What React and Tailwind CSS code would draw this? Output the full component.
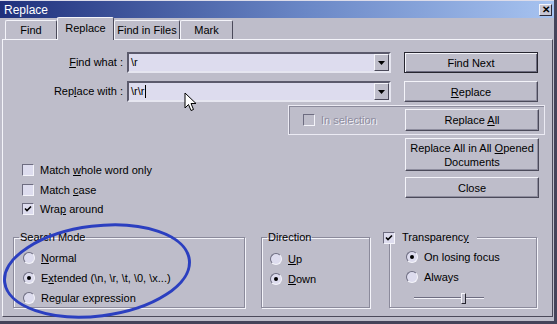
import React from "react";

const BG = "bg-[#bebdca]";

const Check = ({ checked, disabled }) => (
  <span
    className={`inline-flex h-[12px] w-[12px] shrink-0 items-center justify-center border border-t-[#6d6c80] border-l-[#6d6c80] border-b-[#f4f4fa] border-r-[#f4f4fa] ${
      disabled ? "bg-[#bebdca]" : "bg-[#dddcee]"
    }`}
  >
    {checked && (
      <svg width="8" height="8" viewBox="0 0 8 8">
        <path d="M1 3.5 L3 5.5 L7 1.5" stroke="#000" strokeWidth="1.6" fill="none" />
      </svg>
    )}
  </span>
);

const Radio = ({ checked }) => (
  <span className="relative inline-flex h-[12px] w-[12px] shrink-0 items-center justify-center rounded-full border border-t-[#6d6c80] border-l-[#6d6c80] border-b-[#f4f4fa] border-r-[#f4f4fa] bg-[#dddcee]">
    {checked && <span className="h-[4px] w-[4px] rounded-full bg-black" />}
  </span>
);

const Btn = ({ children, def, className = "" }) => (
  <div
    className={`flex w-[134px] shrink-0 items-center justify-center whitespace-nowrap text-center leading-[14px] ${BG} ${
      def
        ? "border border-[#26252f] shadow-[inset_1px_1px_0_#f4f4fa,inset_-1px_-1px_0_#6d6c80]"
        : "border border-t-[#f4f4fa] border-l-[#f4f4fa] border-b-[#4b4a5a] border-r-[#4b4a5a] shadow-[inset_-1px_-1px_0_#8e8d9e]"
    } ${className}`}
  >
    {children}
  </div>
);

const Combo = ({ value, caret }) => (
  <div className="flex h-[21px] w-[264px] border-2 border-t-[#5b5a6c] border-l-[#5b5a6c] border-b-[#e6e6f0] border-r-[#e6e6f0] bg-[#dddcee]">
    <div className="flex flex-1 items-center pl-[2px]">
      {value}
      {caret && <span className="ml-[1px] h-[13px] w-[1px] bg-black" />}
    </div>
    <div className={`flex w-[15px] items-center justify-center ${BG} border border-t-[#f4f4fa] border-l-[#f4f4fa] border-b-[#4b4a5a] border-r-[#4b4a5a]`}>
      <svg width="7" height="4" viewBox="0 0 7 4">
        <path d="M0 0 H7 L3.5 4 Z" fill="#000" />
      </svg>
    </div>
  </div>
);

const Group = ({ legend, className = "", legendClass = "ml-[5px] px-[1px]", children }) => (
  <fieldset
    className={`border border-[#8b8a9b] shadow-[1px_1px_0_#f4f4fa,inset_1px_1px_0_#f4f4fa] ${className}`}
  >
    <legend className={`leading-[13px] ${legendClass}`}>{legend}</legend>
    {children}
  </fieldset>
);

const Tab = ({ children, active, w }) => (
  <div
    className={`flex shrink-0 items-center justify-center whitespace-nowrap border border-b-0 border-t-[#f4f4fa] border-l-[#f4f4fa] border-r-[#4b4a5a] rounded-t-[2px] ${BG} ${w} ${
      active ? "relative z-10 h-[23px] -mb-[1px] pb-[2px]" : "h-[19px]"
    }`}
  >
    {children}
  </div>
);

export default function App() {
  return (
    <div
      className={`relative h-[324px] w-[557px] overflow-hidden ${BG} border-r-[3px] border-b-[3px] border-r-[#45445a] border-b-[#45445a] text-[11px] text-black`}
      style={{ fontFamily: '"Liberation Sans", Arial, sans-serif' }}
    >
      {/* title bar */}
      <div className="flex h-[18px] items-center justify-between border-t border-[#dcdcea] bg-[linear-gradient(90deg,#1f307c,#6a87c6_55%,#a7c3f0)] pl-[4px] pr-[2px]">
        <span className="text-[12px] text-white">Replace</span>
        <span className="flex h-[12px] w-[13px] items-center justify-center border border-t-[#f4f4fa] border-l-[#f4f4fa] border-b-[#2c2b3a] border-r-[#2c2b3a] bg-[#c7c6d4] text-[10px] font-bold leading-none text-black">
          ✕
        </span>
      </div>

      {/* tabs */}
      <div className="flex h-[21px] items-end pl-[5px]">
        <Tab w="w-[52px]">Find</Tab>
        <Tab w="w-[57px]" active>Replace</Tab>
        <Tab w="w-[66px]">Find in Files</Tab>
        <Tab w="w-[53px]">Mark</Tab>
      </div>

      {/* tab panel */}
      <div className="ml-[2px] h-[278px] w-[551px] border border-t-[#f4f4fa] border-l-[#f4f4fa] border-b-[#4b4a5a] border-r-[#4b4a5a]">
        <div className="mt-[12px] flex items-center">
          <div className="w-[120px] text-right">
            <u>F</u>ind what :
          </div>
          <div className="ml-[4px]">
            <Combo value="\r" />
          </div>
          <Btn def className="ml-[13px] h-[21px]">Find Next</Btn>
        </div>

        <div className="mt-[8px] flex items-center">
          <div className="w-[120px] text-right">
            Rep<u>l</u>ace with :
          </div>
          <div className="ml-[4px]">
            <Combo value="\r\r" caret />
          </div>
          <Btn className="ml-[13px] h-[21px]">
            <span>
              <u>R</u>eplace
            </span>
          </Btn>
        </div>

        <div className="mt-[3px] ml-[285px] flex h-[30px] w-[257px] items-center justify-between border border-[#ecebf4] pr-[5px] shadow-[inset_1px_1px_0_#8b8a9b]">
          <div className="ml-[14px] flex items-center gap-[6px] whitespace-nowrap text-[#8d8c9e] [text-shadow:1px_1px_0_#f4f4fa]">
            <Check disabled />
            <span>In selection</span>
          </div>
          <Btn className="h-[22px]">
            <span>
              Replace <u>A</u>ll
            </span>
          </Btn>
        </div>

        <div className="mt-[3px] flex">
          <div className="ml-[19px] w-[383px] pt-[26px]">
            <div className="flex h-[12px] items-center gap-[6px]">
              <Check />
              <span>
                Match <u>w</u>hole word only
              </span>
            </div>
            <div className="mt-[8px] flex h-[12px] items-center gap-[6px]">
              <Check />
              <span>
                Match <u>c</u>ase
              </span>
            </div>
            <div className="mt-[7px] flex h-[12px] items-center gap-[6px]">
              <Check checked />
              <span>
                Wra<u>p</u> around
              </span>
            </div>
          </div>
          <div>
            <Btn className="h-[33px]">
              <span>
                Replace All in All <u>O</u>pened
                <br />
                Documents
              </span>
            </Btn>
            <Btn className="mt-[6px] h-[21px]">Close</Btn>
          </div>
        </div>

        <div className="mt-[16px] flex items-start">
          <Group legend="Search Mode" className="ml-[10px] h-[77px] w-[232px]">
            <div className="ml-[9px] mt-[8px] flex flex-col gap-[8px]">
              <div className="flex h-[12px] items-center gap-[6px]">
                <Radio />
                <span>
                  <u>N</u>ormal
                </span>
              </div>
              <div className="flex h-[12px] items-center gap-[6px]">
                <Radio checked />
                <span>
                  E<u>x</u>tended (\n, \r, \t, \0, \x...)
                </span>
              </div>
              <div className="flex h-[12px] items-center gap-[6px]">
                <Radio />
                <span>
                  Re<u>g</u>ular expression
                </span>
              </div>
            </div>
          </Group>

          <Group legend="Direction" className="ml-[16px] h-[77px] w-[109px]">
            <div className="ml-[8px] mt-[9px] flex flex-col gap-[8px]">
              <div className="flex h-[12px] items-center gap-[6px]">
                <Radio />
                <span>
                  <u>U</u>p
                </span>
              </div>
              <div className="flex h-[12px] items-center gap-[6px]">
                <Radio checked />
                <span>
                  <u>D</u>own
                </span>
              </div>
            </div>
          </Group>

          <Group
            legend={
              <span className="flex items-center gap-[7px] pr-[8px]">
                <Check checked />
                <span>
                  Transparenc<u>y</u>
                </span>
              </span>
            }
            legendClass={`-ml-[7px] px-0 ${BG}`}
            className="ml-[19px] h-[77px] w-[148px]"
          >
            <div className="ml-[16px] mt-[7px] flex flex-col gap-[8px]">
              <div className="flex h-[12px] items-center gap-[6px]">
                <Radio checked />
                <span>On losing focus</span>
              </div>
              <div className="flex h-[12px] items-center gap-[6px]">
                <Radio />
                <span>Always</span>
              </div>
              <div className="relative ml-[8px] mt-[2px] h-[10px] w-[70px]">
                <div className="absolute left-0 right-0 top-[4px] h-[2px] border-t border-t-[#6d6c80] border-b border-b-[#f4f4fa]" />
                <div className="absolute left-[47px] top-0 h-[11px] w-[5px] border border-t-[#f4f4fa] border-l-[#f4f4fa] border-b-[#26252f] border-r-[#26252f] bg-[#bebdca]" />
              </div>
            </div>
          </Group>
        </div>
      </div>

      {/* hand-drawn ellipse annotation */}
      <svg className="pointer-events-none absolute left-0 top-0" width="557" height="324">
        <ellipse
          cx="97"
          cy="271"
          rx="93"
          ry="45"
          transform="rotate(-7 97 271)"
          fill="none"
          stroke="#2b3fc0"
          strokeWidth="3"
        />
      </svg>

      {/* mouse cursor */}
      <svg className="pointer-events-none absolute left-[184px] top-[92px]" width="14" height="21" viewBox="0 0 14 21">
        <path
          d="M1 1 L1 16 L4.5 12.5 L7 18.5 L9.5 17.5 L7 11.5 L12 11.5 Z"
          fill="#fff"
          stroke="#000"
          strokeWidth="1"
          strokeLinejoin="round"
        />
      </svg>
    </div>
  );
}
